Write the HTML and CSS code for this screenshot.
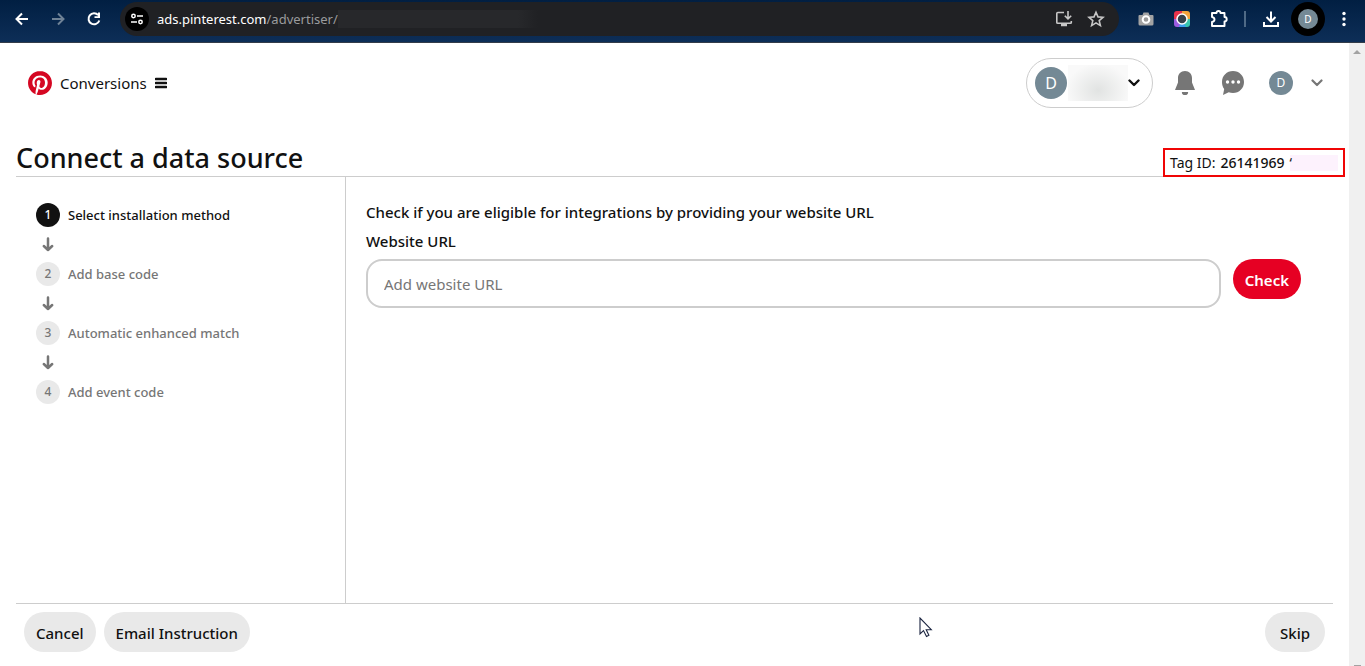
FILE: index.html
```
<!DOCTYPE html>
<html lang="en">
<head>
    <meta charset="UTF-8">
    <meta name="viewport" content="width=device-width, initial-scale=1.0">
    <title>Connect a data source</title>
    <link rel="stylesheet" href="styles.css">
</head>
<body>
    <div class="browser-bar">
        <button class="nav-btn" aria-label="Back">
            <svg width="16" height="16" viewBox="0 0 16 16" fill="none" stroke="#fff" stroke-width="2"><path d="M14 8H3M8 2.5L2.5 8L8 13.5"/></svg>
        </button>
        <button class="nav-btn" aria-label="Forward">
            <svg width="16" height="16" viewBox="0 0 16 16" fill="none" stroke="#6f8296" stroke-width="2"><path d="M2 8H13M8 2.5L13.5 8L8 13.5"/></svg>
        </button>
        <button class="nav-btn" aria-label="Reload">
            <svg width="16" height="16" viewBox="0 0 16 16"><path d="M13.3 9.5A5.5 5.5 0 1 1 12.2 4.2" fill="none" stroke="#fff" stroke-width="2"/><path d="M14 1.5V7H8.5V5.2H12V1.5z" fill="#fff"/></svg>
        </button>
        <div class="address-bar">
            <button class="site-info" aria-label="Site information">
                <svg width="14" height="14" viewBox="0 0 14 14" fill="none" stroke="#fff" stroke-width="1.5"><circle cx="3.5" cy="4" r="1.7"/><path d="M7 4H13M1 10H7"/><circle cx="10.5" cy="10" r="1.7"/></svg>
            </button>
            <span class="url">ads.pinterest.com<span class="url-path">/advertiser/</span></span>
            <span class="url-hidden"></span>
            <div class="address-actions">
                <button class="icon-btn" aria-label="Install app">
                    <svg width="18" height="18" viewBox="0 0 18 18" fill="none" stroke="#c7c7c7" stroke-width="1.6"><path d="M9 2.5H2.8Q1.8 2.5 1.8 3.5V12.5Q1.8 13.3 2.8 13.3H15.5Q16.3 13.3 16.3 12.5V11"/><path d="M13 1V8.5M9.8 5.7L13 8.9L16.2 5.7"/><path d="M6 15H12" stroke-width="2.5"/></svg>
                </button>
                <button class="icon-btn" aria-label="Bookmark this page">
                    <svg width="18" height="18" viewBox="0 0 18 18" fill="none" stroke="#c7c7c7" stroke-width="1.6"><path d="M9 2.2L11 6.9L16 7.3L12.2 10.6L13.4 15.6L9 12.9L4.6 15.6L5.8 10.6L2 7.3L7 6.9Z"/></svg>
                </button>
            </div>
        </div>
        <div class="extensions">
            <button class="icon-btn" aria-label="Screenshot">
                <svg width="16" height="16" viewBox="0 0 16 16"><path d="M1.5 4H4.5L5.5 1.5H10.5L11.5 4H14.5Q15.5 4 15.5 5V13Q15.5 14.5 14 14.5H2Q.5 14.5 .5 13V5Q.5 4 1.5 4z" fill="#a3a3a3"/><circle cx="8" cy="8.5" r="3.3" fill="#999" stroke="#fff" stroke-width="2"/></svg>
            </button>
            <button class="icon-btn" aria-label="Screen capture">
                <svg width="16" height="16" viewBox="0 0 16 16">
                    <defs><clipPath id="lens"><rect width="16" height="16" rx="3"/></clipPath></defs>
                    <g clip-path="url(#lens)"><path d="M0 0H8V8H0z" fill="#e8334b"/><path d="M8 0H16V8H8z" fill="#f2a23a"/><path d="M0 8H8V16H0z" fill="#9b5be0"/><path d="M8 8H16V16H8z" fill="#38c6ae"/><path d="M5 16L8 8L12 16z" fill="#39a0ee"/></g>
                    <circle cx="8" cy="8" r="5" fill="#36414a" stroke="#fff" stroke-width="1.5"/>
                </svg>
            </button>
            <button class="icon-btn" aria-label="Extensions">
                <svg width="18" height="18" viewBox="0 0 18 18" fill="none" stroke="#fff" stroke-width="1.9" stroke-linejoin="round"><path d="M2 3H6.5Q6.500 1 8.5 1T10.500 3H14.5V7Q16.7 7 16.7 9.2T14.5 11.4V16H2V12Q4.5 11.5 4.5 9.5T2 7z"/></svg>
            </button>
            <span class="divider"></span>
            <button class="icon-btn" aria-label="Downloads">
                <svg width="18" height="18" viewBox="0 0 18 18" fill="none" stroke="#fff" stroke-width="2"><path d="M9 1.5V11M4.5 7L9 11.5L13.5 7M2 12V16H16V12"/></svg>
            </button>
            <button class="profile" aria-label="Profile"><span class="avatar avatar-small">D</span></button>
            <button class="icon-btn" aria-label="Menu">
                <svg width="16" height="16" viewBox="0 0 16 16" fill="#fff"><circle cx="8" cy="2.5" r="1.7"/><circle cx="8" cy="8" r="1.7"/><circle cx="8" cy="13.5" r="1.7"/></svg>
            </button>
        </div>
    </div>

    <div class="viewport">
        <div class="page">
            <header class="header">
                <a class="brand" href="#">
                    <svg width="24" height="24" viewBox="0 0 24 24"><path fill="#d50722" d="M12.017 0C5.396 0 .029 5.367.029 11.987c0 5.079 3.158 9.417 7.618 11.162-.105-.949-.199-2.403.041-3.439.219-.937 1.406-5.957 1.406-5.957s-.359-.72-.359-1.781c0-1.663.967-2.911 2.168-2.911 1.024 0 1.518.769 1.518 1.688 0 1.029-.653 2.567-.992 3.992-.285 1.193.6 2.165 1.775 2.165 2.128 0 3.768-2.245 3.768-5.487 0-2.861-2.063-4.869-5.008-4.869-3.41 0-5.409 2.562-5.409 5.199 0 1.033.394 2.143.889 2.741.099.12.112.225.085.345-.09.375-.293 1.199-.334 1.363-.053.225-.172.271-.401.165-1.495-.69-2.433-2.878-2.433-4.646 0-3.776 2.748-7.252 7.92-7.252 4.158 0 7.392 2.967 7.392 6.923 0 4.135-2.607 7.462-6.233 7.462-1.214 0-2.354-.629-2.758-1.379l-.749 2.848c-.269 1.045-1.004 2.352-1.498 3.146 1.123.345 2.306.535 3.55.535 6.607 0 11.985-5.365 11.985-11.987C23.97 5.39 18.592.026 11.985.026z"/></svg>
                    <span>Conversions</span>
                    <svg width="12" height="12" viewBox="0 0 12 12" stroke="#111" stroke-width="2.6" stroke-linecap="round"><path d="M1 2H11M1 6H11M1 10H11"/></svg>
                </a>
                <div class="header-actions">
                    <button class="account" aria-label="Switch account">
                        <span class="avatar avatar-large">D</span>
                        <span class="account-name"></span>
                        <svg width="12" height="8" viewBox="0 0 12 8" fill="none" stroke="#111" stroke-width="2.4" stroke-linecap="round" stroke-linejoin="round"><path d="M1.5 1.5L6 6L10.5 1.5"/></svg>
                    </button>
                    <button class="icon-btn" aria-label="Notifications">
                        <svg width="24" height="24" viewBox="0 0 24 24" fill="#767676"><path d="M12 0C7.8 0 5 3 5 7V11.5L2 19H22L19 11.5V7C19 3 16.2 0 12 0zM8.8 21H15.2A3.2 3.2 0 0 1 8.8 21z"/></svg>
                    </button>
                    <button class="icon-btn" aria-label="Messages">
                        <svg width="24" height="24" viewBox="0 0 24 24"><path d="M12 0C18.2 0 23 4.7 23 11S18.2 22 12 22C10.5 22 9 21.7 7.7 21.2L2 24L3.2 18C1.7 16 1 13.7 1 11C1 4.7 5.8 0 12 0z" fill="#767676"/><circle cx="6.5" cy="11" r="1.7" fill="#fff"/><circle cx="12" cy="11" r="1.7" fill="#fff"/><circle cx="17.5" cy="11" r="1.7" fill="#fff"/></svg>
                    </button>
                    <button class="user" aria-label="Your account">
                        <span class="avatar">D</span>
                        <svg width="12" height="8" viewBox="0 0 12 8" fill="none" stroke="#767676" stroke-width="2.2" stroke-linecap="round" stroke-linejoin="round"><path d="M1.5 1.5L6 6L10.5 1.5"/></svg>
                    </button>
                </div>
            </header>

            <div class="title-row">
                <h1>Connect a data source</h1>
                <p class="tag-id">Tag ID: <b>26141969</b><span class="tag-hidden">‘</span></p>
            </div>

            <main class="wizard">
                <ol class="steps">
                    <li class="step active"><span class="number">1</span>Select installation method</li>
                    <li class="step"><span class="number">2</span>Add base code</li>
                    <li class="step"><span class="number">3</span>Automatic enhanced match</li>
                    <li class="step"><span class="number">4</span>Add event code</li>
                </ol>
                <section class="content">
                    <p>Check if you are eligible for integrations by providing your website URL</p>
                    <form class="url-form">
                        <label for="website">Website URL</label>
                        <div class="url-row">
                            <input type="text" id="website" name="website" placeholder="Add website URL">
                            <button type="submit" class="btn btn-red">Check</button>
                        </div>
                    </form>
                </section>
            </main>

            <footer class="footer">
                <button class="btn">Cancel</button>
                <button class="btn">Email Instruction</button>
                <button class="btn btn-skip">Skip</button>
            </footer>
        </div>
        <div class="scrollbar">
            <span class="scroll-arrow"></span>
            <span class="scroll-end"></span>
        </div>
    </div>

    <svg class="cursor" width="14" height="21" viewBox="0 0 14 21"><path d="M1 1V17L4.5 13.6L7.5 19.5L9.9 18.3L7.2 12.7H12.3z" fill="#fff" stroke="#1b2440" stroke-width="1.1"/></svg>
</body>
</html>
```
FILE: styles.css
```
* {
    box-sizing: border-box;
}
body {
    margin: 0;
    height: 100vh;
    display: flex;
    flex-direction: column;
    font-family: "Noto Sans", "Open Sans", sans-serif;
    font-size: 15px;
    line-height: 20px;
    color: #111;
    background-color: #fff;
}
button, input {
    font-family: inherit;
    font-size: inherit;
    line-height: inherit;
    color: inherit;
}
button {
    border: none;
    padding: 0;
    background: none;
    cursor: pointer;
}
svg {
    display: block;
    flex-shrink: 0;
}
h1, p {
    margin: 0;
}

/* browser bar */
.browser-bar {
    display: flex;
    align-items: center;
    flex-shrink: 0;
    height: 43px;
    padding: 0 13px 5px 14px;
    background: linear-gradient(#011f42, #0d2e57);
    border-bottom: 1px solid #333c49;
}
.nav-btn {
    margin-right: 20px;
}
.address-bar {
    display: flex;
    align-items: center;
    flex: 1;
    height: 34px;
    margin-left: -2px;
    padding: 0 14px 0 5px;
    border-radius: 17px;
    background-color: #202124;
    font-size: 13px;
}
.site-info {
    display: flex;
    align-items: center;
    justify-content: center;
    width: 24px;
    height: 24px;
    margin-right: 8px;
    border-radius: 50%;
    background-color: #000;
}
.url {
    color: #fff;
}
.url-path {
    color: #9a9b9d;
}
.url-hidden {
    width: 200px;
    height: 18px;
    background: linear-gradient(to right, #27282b 90%, #202124);
}
.address-actions {
    display: flex;
    gap: 14px;
    margin-left: auto;
}
.extensions {
    display: flex;
    align-items: center;
    gap: 20px;
    margin-left: 19px;
}
.divider {
    width: 2px;
    height: 16px;
    margin: 0 -4px;
    background-color: #4f6a86;
}
.profile {
    display: flex;
    align-items: center;
    justify-content: center;
    width: 34px;
    height: 34px;
    margin: 0 -9px;
    border-radius: 50%;
    background-color: #000;
}
.avatar {
    display: flex;
    align-items: center;
    justify-content: center;
    width: 24px;
    height: 24px;
    border-radius: 50%;
    background-color: #748995;
    color: #fff;
    font-size: 12px;
}
.avatar-small {
    width: 20px;
    height: 20px;
    font-size: 10px;
}
.avatar-large {
    width: 32px;
    height: 32px;
    font-size: 16px;
}

/* page */
.viewport {
    display: flex;
    flex: 1;
    min-height: 0;
}
.page {
    display: flex;
    flex-direction: column;
    flex: 1;
}
.header {
    display: flex;
    align-items: center;
    justify-content: space-between;
    height: 80px;
    padding: 0 26px 0 28px;
}
.brand {
    display: flex;
    align-items: center;
    gap: 8px;
    color: #111;
    text-decoration: none;
}
.header-actions {
    display: flex;
    align-items: center;
    gap: 24px;
}
.account {
    display: flex;
    align-items: center;
    height: 50px;
    margin-right: -4px;
    padding: 0 12px 0 8px;
    border: 1px solid #cdcdcd;
    border-radius: 25px;
}
.account-name {
    width: 60px;
    height: 36px;
    margin-left: 1px;
    background: radial-gradient(at 50% 70%, #e1e3e2, #f9f9f9 75%);
}
.user {
    display: flex;
    align-items: center;
    gap: 18px;
}
.title-row {
    display: flex;
    align-items: flex-end;
    justify-content: space-between;
    height: 54px;
    margin: 0 4px 0 16px;
    border-bottom: 1px solid #cdcdcd;
}
h1 {
    font-size: 27px;
    font-weight: 500;
    line-height: 36px;
}
.tag-id {
    display: flex;
    align-items: center;
    gap: 5px;
    width: 182px;
    height: 29px;
    margin-bottom: -1px;
    padding: 0 5px;
    border: 2px solid #f00505;
    background-color: #fff;
    font-size: 14px;
}
.tag-id b {
    font-weight: 500;
}
.tag-hidden {
    flex: 1;
    height: 16px;
    line-height: 16px;
    background-color: #fdf2fd;
}
.wizard {
    display: grid;
    grid-template-columns: 330px 1fr;
    flex: 1;
    margin: 0 16px;
}
.steps {
    margin: 0;
    padding: 26px 20px;
    border-right: 1px solid #cdcdcd;
    list-style: none;
    font-size: 13px;
    font-weight: 500;
}
.step {
    display: flex;
    align-items: center;
    flex-wrap: wrap;
    gap: 0 8px;
    line-height: 24px;
    color: #767676;
}
.step.active {
    color: #111;
}
.number {
    width: 24px;
    height: 24px;
    border-radius: 50%;
    background-color: #e9e9e9;
    font-size: 12px;
    text-align: center;
}
.active .number {
    background-color: #111;
    color: #fff;
}
.step:not(:last-child)::after {
    content: "";
    flex-basis: 100%;
    height: 35px;
    background: url("data:image/svg+xml,%3Csvg xmlns='http://www.w3.org/2000/svg' width='12' height='15' fill='none' stroke='%23767676' stroke-width='2.5' stroke-linecap='round' stroke-linejoin='round'%3E%3Cpath d='M6 1.5V13M1.8 9L6 13L10.2 9'/%3E%3C/svg%3E") no-repeat 6px 10px;
}
.content {
    padding: 25px 20px;
    font-weight: 500;
}
.url-form {
    margin-top: 9px;
}
.url-form label {
    display: block;
    margin-bottom: 8px;
}
.url-row {
    display: flex;
    align-items: flex-start;
    gap: 12px;
    margin-right: 12px;
}
.url-row input {
    flex: 1;
    height: 49px;
    padding: 0 16px;
    border: 2px solid #cdcdcd;
    border-radius: 16px;
    outline: none;
}
.url-row input::placeholder {
    color: #767676;
}
.btn {
    height: 40px;
    padding: 2px 12px 0;
    border-radius: 20px;
    background-color: #e9e9e9;
    font-weight: 500;
}
.btn-red {
    background-color: #e60023;
    color: #fff;
    font-weight: 600;
}
.footer {
    display: flex;
    gap: 8px;
    height: 63px;
    margin: 0 16px;
    padding: 8px 8px 0;
    border-top: 1px solid #cdcdcd;
}
.btn-skip {
    min-width: 60px;
    margin-left: auto;
}
.scrollbar {
    display: flex;
    flex-direction: column;
    align-items: center;
    justify-content: space-between;
    width: 16px;
    padding-top: 7px;
    background-color: #f0f0f0;
}
.scroll-arrow {
    border: 4px solid transparent;
    border-top: none;
    border-bottom-color: #a3a3a3;
}
.scroll-end {
    width: 7px;
    height: 1px;
    background-color: #a3a3a3;
}
.cursor {
    position: absolute;
    left: 919px;
    top: 617px;
}
```
